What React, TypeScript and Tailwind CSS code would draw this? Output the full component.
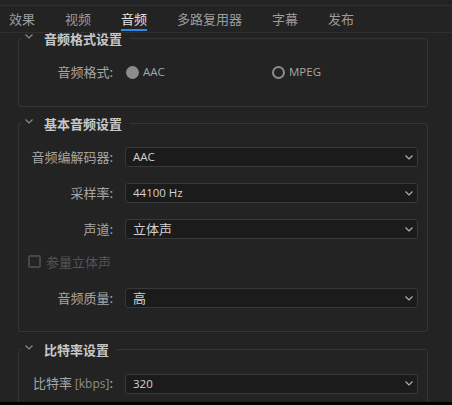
import React from 'react';

const cjk = "font-['Noto_Sans_CJK_SC',sans-serif]";
const latin = "font-['Open_Sans','Noto_Sans_CJK_SC',sans-serif]";

const tabs = ['效果', '视频', '音频', '多路复用器', '字幕', '发布'];

const Chevron: React.FC<{ className?: string }> = ({ className }) => (
  <svg width="8" height="5" viewBox="0 0 8 5" className={className}>
    <path d="M0.5 0.5 L4 4 L7.5 0.5" fill="none" stroke="currentColor" strokeWidth="1.2" />
  </svg>
);

const Section: React.FC<{ title: string; className?: string; bodyClass?: string; children: React.ReactNode }> = ({
  title,
  className = '',
  bodyClass = '',
  children,
}) => (
  <fieldset className={`w-[410px] border border-[#353535] rounded-[3px] ${className}`}>
    <legend className="ml-[3px] flex items-start pl-[3px] pr-2 leading-[11px]">
      <Chevron className="mt-[1px] text-[#8a8a8a]" />
      <span className={`ml-[11px] text-[13px] font-bold text-[#c8c8c8] leading-[11px] ${cjk}`}>{title}</span>
    </legend>
    <div className={bodyClass}>{children}</div>
  </fieldset>
);

const Label: React.FC<{ children: React.ReactNode }> = ({ children }) => (
  <div className={`w-[94px] shrink-0 text-right text-[13px] leading-5 text-[#a6a6a6] ${cjk}`}>{children}</div>
);

const Select: React.FC<{ value: string; cjkValue?: boolean }> = ({ value, cjkValue }) => (
  <div className="ml-3 flex h-5 w-[293px] items-center justify-between rounded-[3px] border border-[#383838] bg-[#1b1b1b] pl-[7px] pr-[4px]">
    <span className={`text-[#d2d2d2] ${cjkValue ? `text-[13px] ${cjk}` : `text-[11.5px] ${latin}`}`}>{value}</span>
    <Chevron className="text-[#b0b0b0]" />
  </div>
);

const Row: React.FC<{ label: React.ReactNode; value: string; cjkValue?: boolean; className?: string }> = ({
  label,
  value,
  cjkValue,
  className = '',
}) => (
  <div className={`flex items-center ${className}`}>
    <Label>{label}</Label>
    <Select value={value} cjkValue={cjkValue} />
  </div>
);

export default function App() {
  return (
    <div className="flex h-[405px] w-[452px] flex-col overflow-hidden bg-[#232323]">
      <div className="h-[6px] shrink-0 border-b border-[#2f2f2f]" />
      <div className="flex shrink-0 gap-[30px] border-b border-[#2f2f2f] pl-[9px]">
        {tabs.map((t) => {
          const active = t === '音频';
          return (
            <div key={t} className="flex flex-col pt-[5px] pb-[1px]">
              <span className={`text-[13px] leading-4 ${cjk} ${active ? 'text-[#e2e2e2]' : 'text-[#9c9c9c]'}`}>{t}</span>
              <div className={`mt-[2px] h-[2px] ${active ? 'bg-[#2b8ae8]' : 'bg-transparent'}`} />
            </div>
          );
        })}
      </div>

      <div className="min-h-0 flex-1 pl-[18px]">
        <Section title="音频格式设置" bodyClass="pt-[18px] pb-[24px]">
          <div className="flex h-5 items-center">
            <Label>音频格式:</Label>
            <div className="ml-[13px] flex w-[146px] items-center">
              <span className="h-[13px] w-[13px] rounded-full bg-[#8c8c8c]" />
              <span className={`ml-[4px] text-[11.5px] text-[#a6a6a6] ${latin}`}>AAC</span>
            </div>
            <div className="flex items-center">
              <span className="h-[13px] w-[13px] rounded-full border-2 border-[#8c8c8c]" />
              <span className={`ml-[4px] text-[11.5px] text-[#a6a6a6] ${latin}`}>MPEG</span>
            </div>
          </div>
        </Section>

        <Section title="基本音频设置" className="mt-[11px]" bodyClass="pt-[18px] pb-[23px]">
          <Row label="音频编解码器:" value="AAC" />
          <Row label="采样率:" value="44100 Hz" className="mt-4" />
          <Row label="声道:" value="立体声" cjkValue className="mt-4" />
          <div className="mt-4 flex h-[13px] items-center pl-[9px]">
            <span className="h-[13px] w-[13px] rounded-[2px] border-2 border-[#474747]" />
            <span className={`ml-[5px] text-[13px] text-[#555555] ${cjk}`}>参量立体声</span>
          </div>
          <Row label="音频质量:" value="高" cjkValue className="mt-5" />
        </Section>

        <Section title="比特率设置" className="mt-3" bodyClass="pt-[18px] pb-6">
          <Row
            label={
              <>
                比特率 <span className={`text-[12px] text-[#8e8e8e] ${latin}`}>[kbps]</span>:
              </>
            }
            value="320"
          />
        </Section>
      </div>
      <div className="h-[3px] shrink-0 bg-black" />
    </div>
  );
}
